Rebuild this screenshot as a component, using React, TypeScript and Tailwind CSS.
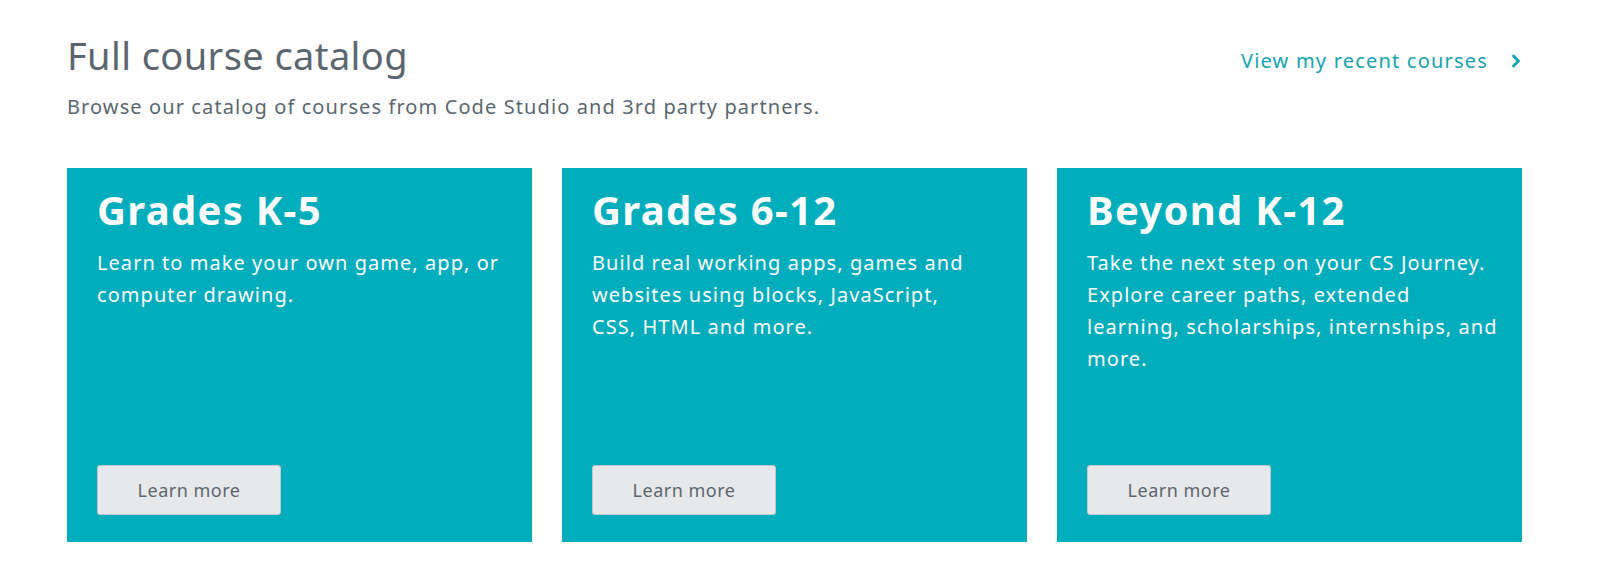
import { ChevronRight } from "lucide-react";

// 줄바꿈은 원본과 맞추기 위해 직접 지정
const courses = [
  {
    title: "Grades K-5",
    lines: ["Learn to make your own game, app, or", "computer drawing."],
  },
  {
    title: "Grades 6-12",
    lines: [
      "Build real working apps, games and",
      "websites using blocks, JavaScript,",
      "CSS, HTML and more.",
    ],
  },
  {
    title: "Beyond K-12",
    lines: [
      "Take the next step on your CS Journey.",
      "Explore career paths, extended",
      "learning, scholarships, internships, and",
      "more.",
    ],
  },
];

function CourseCard({ title, lines }: { title: string; lines: string[] }) {
  return (
    <div className="flex h-[374px] flex-col bg-[#00adbc] px-[30px] pb-[27px] pt-[18px] text-white">
      <h2 className="text-[40px] font-bold leading-[48px] tracking-[1.3px]">{title}</h2>
      <p className="mt-[13px] whitespace-nowrap text-[20px] leading-[32px] tracking-[1.05px]">
        {lines.map((line, i) => (
          <span key={i} className="block">
            {line}
          </span>
        ))}
      </p>
      <button className="mt-auto h-[50px] w-[184px] rounded-[3px] border border-[#c5c8cc] bg-[#e7e8ea] text-[18px] tracking-[0.5px] text-[#5b6770]">
        Learn more
      </button>
    </div>
  );
}

export default function App() {
  return (
    <div className="min-h-screen bg-white font-['Noto_Sans',sans-serif]">
      <div className="ml-[67px] w-[1455px] pt-[30px]">
        {/* 헤더 */}
        <div className="flex items-start justify-between">
          <h1 className="text-[38px] font-normal leading-[50px] tracking-[0.4px] text-[#5b6770]">
            Full course catalog
          </h1>
          <a className="mr-[-4px] mt-[16px] flex items-center gap-[18px] text-[20px] tracking-[1.2px] text-[#14a3b1]">
            View my recent courses
            <ChevronRight className="size-5" strokeWidth={3.5} />
          </a>
        </div>
        <p className="mt-[13px] text-[20px] leading-[28px] tracking-[1.1px] text-[#5b6770]">
          Browse our catalog of courses from Code Studio and 3rd party partners.
        </p>

        {/* 카드 목록 */}
        <div className="mt-[47px] grid grid-cols-3 gap-[30px]">
          {courses.map((c) => (
            <CourseCard key={c.title} title={c.title} lines={c.lines} />
          ))}
        </div>
      </div>
    </div>
  );
}
